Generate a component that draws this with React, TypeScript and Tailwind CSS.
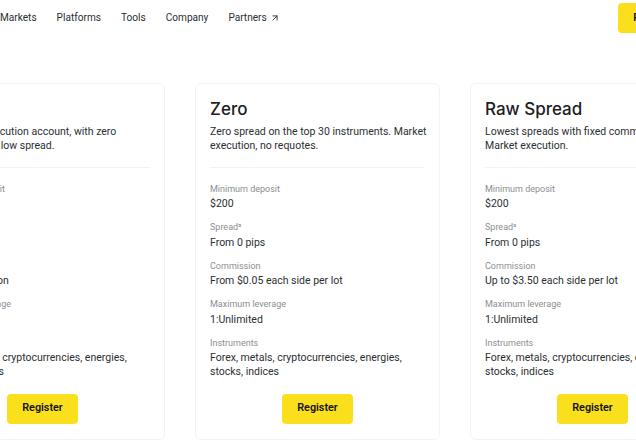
import React from "react";
import { ArrowUpRight } from "lucide-react";

const plans = [
  {
    name: "Pro",
    desc: ["Instant fill execution account, with zero", "commission - low spread."],
    spread: "From 0.1 pips",
    commission: "No commission",
  },
  {
    name: "Zero",
    desc: ["Zero spread on the top 30 instruments. Market", "execution, no requotes."],
    spread: "From 0 pips",
    commission: "From $0.05 each side per lot",
  },
  {
    name: "Raw Spread",
    desc: ["Lowest spreads with fixed commission.", "Market execution."],
    spread: "From 0 pips",
    commission: "Up to $3.50 each side per lot",
  },
];

const Field = ({ label, value }: { label: string; value: string }) => (
  <div className="mb-[10px]">
    <div className="text-[9px] leading-[13px] text-[#8b8e91]">{label}</div>
    <div className="mt-[1.5px] text-[10.5px] leading-[14px] text-[#2b2f33]">{value}</div>
  </div>
);

const App: React.FC = () => {
  return (
    <div className="h-[446px] w-[636px] overflow-hidden bg-white font-['Roboto','Liberation_Sans',sans-serif]">
      {/* Top nav */}
      <header className="flex h-[83px] items-start">
        <nav className="flex gap-[20px] pt-[11px] text-[10.1px] leading-[13px] text-[#2b2f33]">
          <span>Markets</span>
          <span>Platforms</span>
          <span>Tools</span>
          <span>Company</span>
          <span className="flex items-center gap-[3px]">
            Partners <ArrowUpRight size={10} strokeWidth={2.2} />
          </span>
        </nav>
        <div className="mt-[3px] ml-auto mr-[-53px] flex h-[30px] w-[71px] shrink-0 items-center justify-center rounded-[4px] bg-[#fadf1c] text-[10.8px] font-semibold text-[#141414]">
          Register
        </div>
      </header>

      {/* Account cards */}
      <div className="ml-[-80px] flex w-[800px] gap-[30px]">
        {plans.map((p) => (
          <section
            key={p.name}
            className="flex h-[357px] w-[245px] shrink-0 flex-col rounded-[6px] border border-[#f2f3f4] px-[14px] pt-[13px]"
          >
            <h2 className="font-['Inter','Liberation_Sans',sans-serif] text-[17px] leading-[24px] font-medium text-[#1c2024]">
              {p.name}
            </h2>
            <p className="mt-[4px] text-[10.5px] leading-[14px] whitespace-nowrap text-[#2b2f33]">
              {p.desc[0]}
              <br />
              {p.desc[1]}
            </p>
            <div className="mt-[14px] mb-[14.5px] h-px bg-[#f2f3f4]" />
            <Field label="Minimum deposit" value="$200" />
            <Field label="Spread³" value={p.spread} />
            <Field label="Commission" value={p.commission} />
            <Field label="Maximum leverage" value="1:Unlimited" />
            <div>
              <div className="text-[9px] leading-[13px] text-[#8b8e91]">Instruments</div>
              <div className="mt-[1.5px] text-[10.5px] leading-[14px] text-[#2b2f33]">
                Forex, metals, cryptocurrencies, energies, stocks, indices
              </div>
            </div>
            <button className="mx-auto mt-[14.5px] h-[30px] w-[71px] rounded-[4px] bg-[#fadf1c] text-[10.8px] font-semibold text-[#141414]">
              Register
            </button>
          </section>
        ))}
      </div>
    </div>
  );
};

export default App;
